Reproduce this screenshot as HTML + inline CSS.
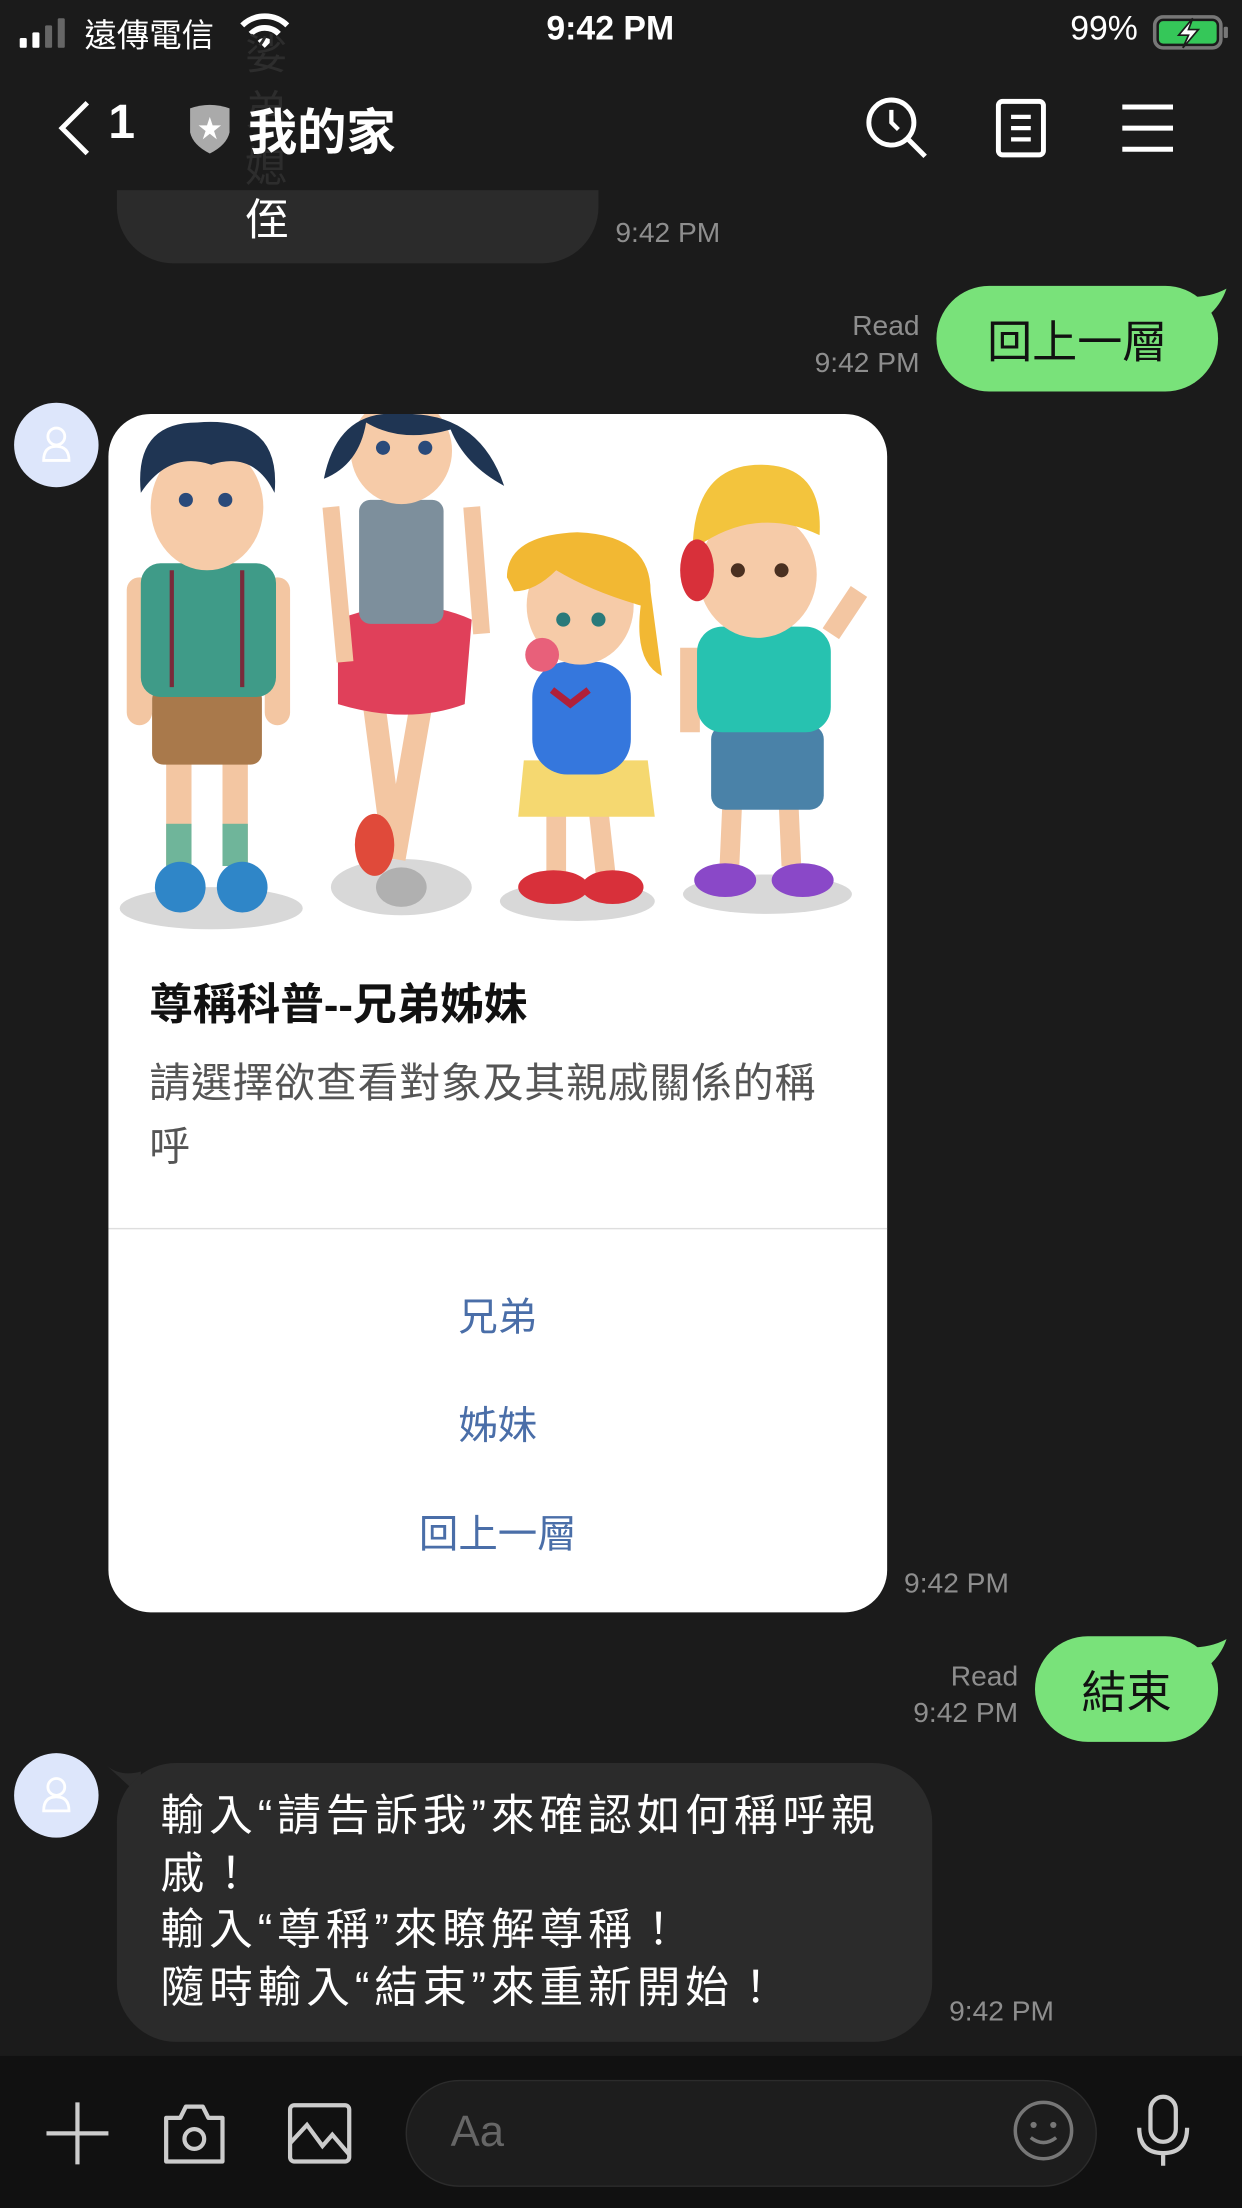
<!DOCTYPE html>
<html><head><meta charset="utf-8">
<style>
*{margin:0;padding:0;box-sizing:border-box}
html,body{width:1242px;height:2208px;overflow:hidden;background:#1b1b1b}
#w{position:absolute;left:0;top:0;width:882px;height:1568px;transform:scale(1.408163);transform-origin:0 0;background:#1b1b1b;font-family:"Liberation Sans","Noto Sans CJK TC",sans-serif;color:#fff}
.a{position:absolute;white-space:nowrap}
.t{position:absolute;color:#8e8e8e;font-size:20px;white-space:nowrap;line-height:24px}
.g{position:absolute;background:#79e27a;border-radius:38px;color:#111;font-size:32px;display:flex;align-items:center;justify-content:center}
.av{position:absolute;width:60px;height:60px;border-radius:50%;background:#dde6fb}
.btn{position:absolute;left:0;width:553px;text-align:center;color:#4a6ea8;font-size:28px}
</style></head><body><div id="w">
<svg class="a" style="left:12px;top:12px" width="40" height="22"><rect x="2" y="15" width="5" height="7" rx="1" fill="#fff"/><rect x="11" y="11" width="5" height="11" rx="1" fill="#fff"/><rect x="20" y="6" width="5" height="16" rx="1" fill="#666"/><rect x="29" y="1" width="5" height="21" rx="1" fill="#666"/></svg>
<div class="a" style="left:60px;top:6px;font-size:23px">遠傳電信</div>
<svg class="a" style="left:170px;top:9px" width="36" height="26" viewBox="0 0 36 26"><path d="M2 9 A23 23 0 0 1 34 9" stroke="#fff" stroke-width="4" fill="none"/><path d="M8 15 A14 14 0 0 1 28 15" stroke="#fff" stroke-width="4" fill="none"/><path d="M13 20 L18 25 L23 20 A7 7 0 0 0 13 20Z" fill="#fff"/></svg>
<div class="a" style="left:388px;top:7px;font-size:24px;font-weight:bold">9:42 PM</div>
<div class="a" style="left:760px;top:7px;font-size:24px">99%</div>
<svg class="a" style="left:818px;top:10px" width="56" height="26"><rect x="2" y="2" width="47" height="22" rx="6" fill="none" stroke="#777" stroke-width="2.5"/><rect x="5" y="5" width="41" height="16" rx="3" fill="#35c759"/><rect x="51" y="9" width="3" height="8" rx="1" fill="#777"/><path d="M29 3 L19 15 H26 L22 24 L33 11 H26 Z" fill="#fff" stroke="#1b1b1b" stroke-width="1.2"/></svg>
<div class="a" style="left:174px;top:20px;font-size:30px;color:#2d2d2d;line-height:40px;white-space:normal;width:60px">娑<br>弟<br>媳</div>
<svg class="a" style="left:38px;top:70px" width="30" height="42"><path d="M24 3 L6 21 L24 39" stroke="#fff" stroke-width="3.5" fill="none"/></svg>
<div class="a" style="left:77px;top:68px;font-size:34px;font-weight:bold">1</div>
<svg class="a" style="left:133px;top:72px" width="32" height="38"><path d="M2 5 Q16 0 30 5 V22 Q28 31 16 37 Q4 31 2 22Z" fill="#aaa"/><path d="M16 11 L18 17 H24 L19 21 L21 27 L16 23 L11 27 L13 21 L8 17 H14Z" fill="#fff"/></svg>
<div class="a" style="left:176px;top:66px;font-size:35px;font-weight:bold">我的家</div>
<svg class="a" style="left:614px;top:68px" width="46" height="46"><circle cx="19" cy="19" r="16" stroke="#fff" stroke-width="3.5" fill="none"/><path d="M31 31 L43 43" stroke="#fff" stroke-width="3.5"/><path d="M19 10 V19 L24 24" stroke="#fff" stroke-width="3" fill="none"/></svg>
<svg class="a" style="left:706px;top:70px" width="38" height="42"><rect x="3" y="2" width="32" height="38" rx="3" stroke="#fff" stroke-width="3.5" fill="none"/><path d="M12 13 H26 M12 21 H26 M12 29 H26" stroke="#fff" stroke-width="3"/></svg>
<svg class="a" style="left:795px;top:72px" width="40" height="38"><path d="M2 4 H38 M2 19 H38 M2 34 H38" stroke="#fff" stroke-width="3.5"/></svg>
<div class="a" style="left:83px;top:135px;width:342px;height:52px;background:#2b2b2b;border-radius:0 0 40px 40px"></div>
<div class="a" style="left:174px;top:131px;font-size:31px">侄</div>
<div class="t" style="left:437px;top:154px">9:42 PM</div>
<div class="g" style="left:665px;top:203px;width:200px;height:75px">回上一層</div>
<svg class="a" style="left:845px;top:203px" width="28" height="28"><path d="M0 8 Q15 8 26 2 Q22 14 12 22Z" fill="#79e27a"/></svg>
<div class="t" style="left:553px;top:220px;width:100px;text-align:right">Read</div>
<div class="t" style="left:553px;top:246px;width:100px;text-align:right">9:42 PM</div>
<div class="av" style="left:10px;top:286px"></div>
<svg class="a" style="left:28px;top:301px" width="24" height="30"><circle cx="12" cy="9" r="6" stroke="#fff" stroke-width="2" fill="none"/><path d="M3 26 Q3 16 12 16 Q21 16 21 26Z" stroke="#fff" stroke-width="2" fill="none"/></svg>
<div class="a" style="left:77px;top:294px;width:553px;height:851px;background:#fff;border-radius:30px;overflow:hidden">
<svg class="a" style="left:0;top:0" width="553" height="366" viewBox="77 294 553 366">
<g fill="#d8d8d8"><ellipse cx="150" cy="645" rx="65" ry="15"/><ellipse cx="285" cy="630" rx="50" ry="20"/><ellipse cx="410" cy="640" rx="55" ry="14"/><ellipse cx="545" cy="635" rx="60" ry="14"/></g>
<rect x="118" y="540" width="18" height="75" fill="#f3c6a2"/><rect x="158" y="540" width="18" height="75" fill="#f3c6a2"/>
<rect x="118" y="585" width="18" height="30" fill="#6fb59a"/><rect x="158" y="585" width="18" height="30" fill="#6fb59a"/>
<ellipse cx="128" cy="630" rx="18" ry="18" fill="#2f86c8"/><ellipse cx="172" cy="630" rx="18" ry="18" fill="#2f86c8"/>
<rect x="108" y="488" width="78" height="55" rx="8" fill="#a9794b"/>
<rect x="90" y="410" width="18" height="105" rx="9" fill="#f3c6a2"/><rect x="188" y="410" width="18" height="105" rx="9" fill="#f3c6a2"/>
<rect x="100" y="400" width="96" height="95" rx="14" fill="#3f9b88"/>
<path d="M122 405 V488 M172 405 V488" stroke="#7a2a3a" stroke-width="3"/>
<ellipse cx="147" cy="360" rx="40" ry="45" fill="#f6cba8"/>
<path d="M100 350 Q95 300 140 300 Q200 295 195 350 Q180 320 150 330 Q120 320 100 350Z" fill="#1f3553"/>
<circle cx="132" cy="355" r="5" fill="#2a4a7a"/><circle cx="160" cy="355" r="5" fill="#2a4a7a"/>
<path d="M265 495 L280 610 M300 495 L280 610" stroke="#f3c6a2" stroke-width="16"/>
<ellipse cx="266" cy="600" rx="14" ry="22" fill="#e04a3a"/><ellipse cx="285" cy="630" rx="18" ry="14" fill="#b0b0b0"/>
<path d="M240 440 Q290 420 335 440 L330 500 Q290 515 240 500Z" fill="#e0405a"/>
<rect x="255" y="355" width="60" height="88" rx="8" fill="#7d8f9c"/>
<path d="M235 360 L245 470 M335 360 L342 450" stroke="#f3c6a2" stroke-width="12"/>
<ellipse cx="285" cy="320" rx="36" ry="38" fill="#f6cba8"/>
<path d="M230 340 Q240 290 285 294 Q340 292 358 345 Q330 330 320 305 Q285 315 260 300 Q255 330 230 340Z" fill="#1f3553"/>
<circle cx="272" cy="318" r="5" fill="#2a4a7a"/><circle cx="302" cy="318" r="5" fill="#2a4a7a"/>
<path d="M395 575 L395 620 M425 575 L430 620" stroke="#f3c6a2" stroke-width="14"/>
<ellipse cx="393" cy="630" rx="25" ry="12" fill="#d8303a"/><ellipse cx="435" cy="630" rx="22" ry="12" fill="#d8303a"/>
<path d="M372 540 L460 540 L465 580 L368 580Z" fill="#f5d870"/>
<rect x="378" y="470" width="70" height="80" rx="25" fill="#3577dd"/>
<path d="M392 490 L405 500 L418 490" stroke="#b0203a" stroke-width="5" fill="none"/>
<ellipse cx="412" cy="430" rx="38" ry="42" fill="#f6cba8"/>
<path d="M360 410 Q360 380 410 378 Q462 380 462 420 L470 480 Q450 470 455 430 Q420 420 395 405 Q380 420 365 420Z" fill="#f2b833"/>
<circle cx="400" cy="440" r="5" fill="#2a7a7a"/><circle cx="425" cy="440" r="5" fill="#2a7a7a"/>
<circle cx="385" cy="465" r="12" fill="#e8607a"/>
<path d="M520 570 L518 615 M560 570 L562 615" stroke="#f3c6a2" stroke-width="14"/>
<ellipse cx="515" cy="625" rx="22" ry="12" fill="#8a48c8"/><ellipse cx="570" cy="625" rx="22" ry="12" fill="#8a48c8"/>
<rect x="505" y="515" width="80" height="60" rx="10" fill="#4a82a8"/>
<path d="M490 460 L490 520 M590 450 L610 420" stroke="#f3c6a2" stroke-width="14"/>
<rect x="495" y="445" width="95" height="75" rx="18" fill="#27c2b0"/>
<ellipse cx="538" cy="408" rx="42" ry="45" fill="#f6cba8"/>
<path d="M492 385 Q495 330 540 330 Q585 330 582 380 Q540 360 500 385Z" fill="#f3c43d"/>
<ellipse cx="495" cy="405" rx="12" ry="22" fill="#d8303a"/>
<circle cx="524" cy="405" r="5" fill="#4a3020"/><circle cx="555" cy="405" r="5" fill="#4a3020"/>
</svg>
<div class="a" style="left:29px;top:394px;font-size:31px;font-weight:bold;color:#111">尊稱科普--兄弟姊妹</div>
<div class="a" style="left:29px;top:454px;font-size:29px;color:#555;line-height:45px;letter-spacing:0.6px">請選擇欲查看對象及其親戚關係的稱<br>呼</div>
<div class="a" style="left:0;top:578px;width:553px;height:1px;background:#dedede"></div>
<div class="btn" style="top:620px">兄弟</div>
<div class="btn" style="top:697px">姊妹</div>
<div class="btn" style="top:774px">回上一層</div>
</div>
<div class="t" style="left:642px;top:1113px">9:42 PM</div>
<div class="g" style="left:735px;top:1162px;width:130px;height:75px">結束</div>
<svg class="a" style="left:845px;top:1162px" width="28" height="28"><path d="M0 8 Q15 8 26 2 Q22 14 12 22Z" fill="#79e27a"/></svg>
<div class="t" style="left:623px;top:1179px;width:100px;text-align:right">Read</div>
<div class="t" style="left:623px;top:1205px;width:100px;text-align:right">9:42 PM</div>
<div class="av" style="left:10px;top:1245px"></div>
<svg class="a" style="left:28px;top:1260px" width="24" height="30"><circle cx="12" cy="9" r="6" stroke="#fff" stroke-width="2" fill="none"/><path d="M3 26 Q3 16 12 16 Q21 16 21 26Z" stroke="#fff" stroke-width="2" fill="none"/></svg>
<svg class="a" style="left:72px;top:1252px" width="30" height="26"><path d="M4 2 Q14 10 28 6 L28 24Z" fill="#2b2b2b"/></svg>
<div class="a" style="left:83px;top:1252px;width:579px;height:198px;background:#2b2b2b;border-radius:42px"></div>
<div class="a" style="left:114px;top:1270px;font-size:31px;line-height:40.5px;letter-spacing:3.5px">輸入“請告訴我”來確認如何稱呼親<br>戚！<br>輸入“尊稱”來瞭解尊稱！<br>隨時輸入“結束”來重新開始！</div>
<div class="t" style="left:674px;top:1417px">9:42 PM</div>
<div class="a" style="left:0;top:1460px;width:882px;height:108px;background:#111"></div>
<svg class="a" style="left:30px;top:1490px" width="50" height="50"><path d="M25 3 V47 M3 25 H47" stroke="#ccc" stroke-width="3"/></svg>
<svg class="a" style="left:114px;top:1492px" width="48" height="46"><path d="M4 12 H14 L18 4 H30 L34 12 H44 V43 H4Z" stroke="#ccc" stroke-width="3" fill="none" stroke-linejoin="round"/><circle cx="24" cy="27" r="7" stroke="#ccc" stroke-width="3" fill="none"/></svg>
<svg class="a" style="left:203px;top:1492px" width="48" height="46"><rect x="3" y="3" width="42" height="40" rx="3" stroke="#ccc" stroke-width="3" fill="none"/><path d="M3 30 L15 17 L26 32 L33 24 L45 38" stroke="#ccc" stroke-width="3" fill="none"/></svg>
<div class="a" style="left:288px;top:1477px;width:491px;height:76px;background:#1d1d1d;border:1px solid #2c2c2c;border-radius:38px"></div>
<div class="a" style="left:320px;top:1496px;font-size:31px;color:#666">Aa</div>
<svg class="a" style="left:718px;top:1490px" width="46" height="46"><circle cx="23" cy="23" r="20" stroke="#777" stroke-width="2.5" fill="none"/><circle cx="16" cy="19" r="2.2" fill="#777"/><circle cx="30" cy="19" r="2.2" fill="#777"/><path d="M14 28 Q23 35 32 28" stroke="#777" stroke-width="2.5" fill="none"/></svg>
<svg class="a" style="left:806px;top:1487px" width="40" height="52"><rect x="11" y="2" width="18" height="32" rx="9" stroke="#ccc" stroke-width="3" fill="none"/><path d="M3 24 Q3 42 20 42 Q37 42 37 24 M20 42 V51" stroke="#ccc" stroke-width="3" fill="none"/></svg>
</div></body></html>
